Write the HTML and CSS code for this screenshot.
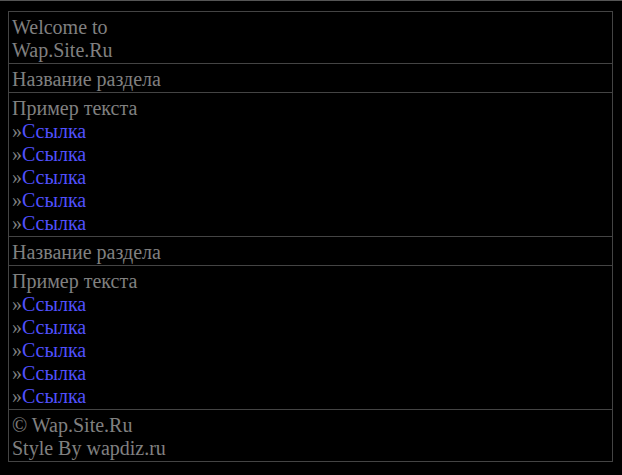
FILE: index.html
```html
<!DOCTYPE html>
<html>
<head>
<meta charset="utf-8">
<link rel="stylesheet" href="styles.css">
</head>
<body>
<div class="page">
  <div class="block head">Welcome to<br>Wap.Site.Ru</div>
  <div class="block title">Название раздела</div>
  <div class="block content">
    Пример текста<br>
    »<a href="#">Ссылка</a><br>
    »<a href="#">Ссылка</a><br>
    »<a href="#">Ссылка</a><br>
    »<a href="#">Ссылка</a><br>
    »<a href="#">Ссылка</a>
  </div>
  <div class="block title">Название раздела</div>
  <div class="block content">
    Пример текста<br>
    »<a href="#">Ссылка</a><br>
    »<a href="#">Ссылка</a><br>
    »<a href="#">Ссылка</a><br>
    »<a href="#">Ссылка</a><br>
    »<a href="#">Ссылка</a>
  </div>
  <div class="block foot">© Wap.Site.Ru<br>Style By wapdiz.ru</div>
</div>
</body>
</html>
```
FILE: styles.css
```css
html {
  background: #000;
  border-top: 1px solid #555;
}
body {
  margin: 10px 9px 0 8px;
  background: #000;
  color: #808080;
  font-family: "Liberation Serif", "Times New Roman", serif;
  font-size: 20px;
  line-height: 23px;
}
.page {
  border: 1px solid #444;
}
.block {
  padding: 4px 3px 1px 3px;
}
.block + .block {
  border-top: 1px solid #444;
}
a {
  color: #5050ff;
  text-decoration: none;
}
```
